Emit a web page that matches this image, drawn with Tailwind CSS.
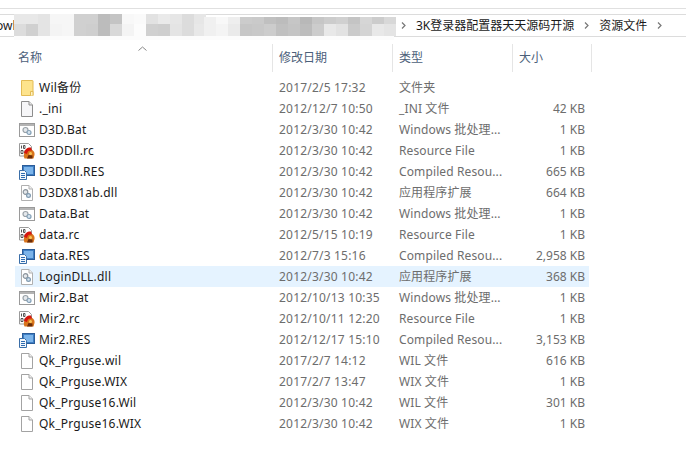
<!DOCTYPE html>
<html lang="zh-CN">
<head>
  <meta charset="UTF-8" />
  <title>资源文件</title>
  <script src="https://cdn.jsdelivr.net/npm/@tailwindcss/browser@4"></script>
</head>
<body class="relative h-[472px] w-[686px] overflow-hidden bg-white font-['Noto_Sans','Noto_Sans_CJK_SC',sans-serif] text-xs">

<svg class="hidden">
  <symbol id="folder" viewBox="0 0 16 16">
    <path d="M2.5 .5h11a.5.5 0 0 1 .5.5v14.5H2.500z" fill="#fde38c" stroke="#e3bb55"/>
    <path d="M11.500 15.500v-4h2.500v4" fill="#fff3c4" stroke="#e3bb55"/>
  </symbol>
  <symbol id="file" viewBox="0 0 16 16">
    <path d="M2.500 .5h7.500l3.500 3.500v11.500h-11z" fill="#fff" stroke="#a3a3a3"/>
    <path d="M10 .5v3.500h3.500" fill="#f0f0f0" stroke="#a3a3a3"/>
  </symbol>
  <symbol id="ini" viewBox="0 0 16 16">
    <path d="M2.500 .5h7.500l3.500 3.500v11.500h-11z" fill="#f6f6f8" stroke="#8d8d8d"/>
    <path d="M10 .5v3.500h3.500" fill="#e8e8e8" stroke="#8d8d8d"/>
  </symbol>
  <symbol id="dll" viewBox="0 0 16 16">
    <path d="M2.500 .5h7.500l3.500 3.500v11.500h-11z" fill="#fff" stroke="#b0b0b0"/>
    <path d="M10 .5v3.500h3.500" fill="#eee" stroke="#b0b0b0"/>
    <circle cx="6.500" cy="7" r="2.300" fill="#e4e8ec" stroke="#8b949c" stroke-width="1.200"/>
    <circle cx="9.500" cy="10.500" r="1.900" fill="#d4e2ee" stroke="#7f9ab0" stroke-width="1.200"/>
  </symbol>
  <symbol id="bat" viewBox="0 0 16 16">
    <rect x=".5" y="1.500" width="15" height="13" fill="#fff" stroke="#9a9a9a"/>
    <rect x="1" y="2" width="14" height="2" fill="#b4b4b4"/>
    <circle cx="6.500" cy="8" r="2.500" fill="#e4e8ec" stroke="#9aa2a8" stroke-width="1.200"/>
    <circle cx="10" cy="10.500" r="2" fill="#d4e2ee" stroke="#84a0b6" stroke-width="1.200"/>
  </symbol>
  <symbol id="rc" viewBox="0 0 16 16">
    <path d="M.5 .5h9l3 3v9.500h-12z" fill="#fff" stroke="#9a9a9a"/>
    <path d="M2.500 2.500v3M4.500 2.500h1.500v3h-1.500zM2 7.500h2v3h-2zM6 7.500v3" fill="none" stroke="#444" stroke-width=".9"/>
    <path d="M5.500 15.500c-1.500-3-.5-7.500 3.500-9 4-1 7 2 6.500 5.500l-1 3.500z" fill="#d9741c"/>
    <path d="M5 10c.5-4 4-6 7-5.500l1 3c-3-.5-4.500 .5-5 3.500z" fill="#d5160e"/>
    <path d="M8 15.500l1.500-3.500 4 .5v3z" fill="#6b2c08"/>
    <circle cx="11.500" cy="10.500" r="1.500" fill="#f7c65c"/>
  </symbol>
  <symbol id="res" viewBox="0 0 16 16">
    <rect x="3.500" y="1.500" width="12" height="10" fill="#3e7fc4" stroke="#2b5c99"/>
    <rect x="5" y="3" width="9" height="7" fill="#7cb4ea"/>
    <path d="M.5 6.500h5l2 2v7h-7z" fill="#f4f8fc" stroke="#3a6ea8"/>
    <path d="M2 9.500h4M2 11.500h4M2 13.500h4" stroke="#2d6bb0"/>
  </symbol>
</svg>

<div class="pt-[8px]"><div class="h-px bg-[#e0e0e0]"></div></div>

<!-- address bar -->
<div class="mt-[5px] flex h-[23px] items-center border-y border-[#dcdcdc] text-[#1a1a1a]">
  <span class="ml-[-4px] w-[18px] shrink-0 overflow-hidden">owl</span>
  <div class="ml-[387px] flex items-center">
    <svg class="h-[7px] w-[5px]" viewBox="0 0 5 7"><path d="M1 .5l3 3-3 3" fill="none" stroke="#777" stroke-width="1.200"/></svg>
    <span class="ml-[10px] whitespace-nowrap">3K登录器配置器天天源码开源</span>
    <svg class="ml-[10px] h-[7px] w-[5px]" viewBox="0 0 5 7"><path d="M1 .5l3 3-3 3" fill="none" stroke="#777" stroke-width="1.200"/></svg>
    <span class="ml-[10px] whitespace-nowrap">资源文件</span>
    <svg class="ml-[10px] h-[7px] w-[5px]" viewBox="0 0 5 7"><path d="M1 .5l3 3-3 3" fill="none" stroke="#777" stroke-width="1.200"/></svg>
  </div>
</div>

<!-- pixelated part of the path -->
<div id="mos1" class="absolute left-[14px] top-[14px] grid h-[22px] w-[190px] grid-cols-[repeat(16,12px)] grid-rows-[10px_12px] bg-white"></div>
<div id="mos2" class="absolute left-[204px] top-[17px] grid h-[19px] w-[190px] grid-cols-[repeat(16,12px)] grid-rows-[7px_12px] bg-white"></div>
<div class="absolute left-[14px] top-[36px] h-[4px] w-[380px] bg-[#fcfcfc]"></div>

<!-- column headers -->
<div class="relative mt-[7px] flex h-[28px] items-center text-[#4c607a]">
  <svg class="absolute left-[138px] top-[2px] h-[5px] w-[9px]" viewBox="0 0 9 5"><path d="M.5 4.500l4-3.500 4 3.500" fill="none" stroke="#888"/></svg>
  <span class="w-[272px] border-r-0 pl-[18px]">名称</span>
  <span class="h-full w-[120px] border-l border-[#e5e5e5] pl-[6px] leading-[28px]">修改日期</span>
  <span class="h-full w-[120px] border-l border-[#e5e5e5] pl-[6px] leading-[28px]">类型</span>
  <span class="h-full w-[80px] border-x border-[#e5e5e5] pl-[6px] leading-[28px]">大小</span>
</div>

<!-- rows -->
<div id="rows" class="ml-[15px] mt-[5px] w-[574px]"></div>

<script>
  const files = [
    ["folder", "Wil备份", "2017/2/5 17:32", "文件夹", ""],
    ["ini", "._ini", "2012/12/7 10:50", "_INI 文件", "42 KB"],
    ["bat", "D3D.Bat", "2012/3/30 10:42", "Windows 批处理...", "1 KB"],
    ["rc", "D3DDll.rc", "2012/3/30 10:42", "Resource File", "1 KB"],
    ["res", "D3DDll.RES", "2012/3/30 10:42", "Compiled Resou...", "665 KB"],
    ["dll", "D3DX81ab.dll", "2012/3/30 10:42", "应用程序扩展", "664 KB"],
    ["bat", "Data.Bat", "2012/3/30 10:42", "Windows 批处理...", "1 KB"],
    ["rc", "data.rc", "2012/5/15 10:19", "Resource File", "1 KB"],
    ["res", "data.RES", "2012/7/3 15:16", "Compiled Resou...", "2,958 KB"],
    ["dll", "LoginDLL.dll", "2012/3/30 10:42", "应用程序扩展", "368 KB"],
    ["bat", "Mir2.Bat", "2012/10/13 10:35", "Windows 批处理...", "1 KB"],
    ["rc", "Mir2.rc", "2012/10/11 12:20", "Resource File", "1 KB"],
    ["res", "Mir2.RES", "2012/12/17 15:10", "Compiled Resou...", "3,153 KB"],
    ["file", "Qk_Prguse.wil", "2017/2/7 14:12", "WIL 文件", "616 KB"],
    ["file", "Qk_Prguse.WIX", "2017/2/7 13:47", "WIX 文件", "1 KB"],
    ["file", "Qk_Prguse16.Wil", "2012/3/30 10:42", "WIL 文件", "301 KB"],
    ["file", "Qk_Prguse16.WIX", "2012/3/30 10:42", "WIX 文件", "1 KB"]
  ];

  document.getElementById("rows").innerHTML = files.map(function (f, i) {
    const bg = i == 9 ? "bg-[#e5f3ff]" : "";
    return `<div class="flex h-[21px] items-center pl-[4px] pr-[4px] ${bg}">
      <svg class="h-[16px] w-[16px] shrink-0"><use href="#${f[0]}"></use></svg>
      <span class="ml-[4px] w-[240px] shrink-0 tracking-[0.22px] text-[#1a1a1a]">${f[1]}</span>
      <span class="w-[120px] shrink-0 tracking-[0.2px] text-[#6d6d6d]">${f[2]}</span>
      <span class="w-[120px] shrink-0 tracking-[0.12px] text-[#6d6d6d]">${f[3]}</span>
      <span class="flex-1 text-right text-[#6d6d6d]">${f[4]}</span>
    </div>`;
  }).join("");

  const mos1 = ["#e8e8e8","#e8e8e8","#e4e4e4","#f6f6f6","#f6f6f6","#d0d0d0","#d0d0d0","#bcbcbc","#c4c4c4","#f8f8f8","#fafafa","#e2e2e2","#eaeaea","#e6e6e6","#dcdcdc","#e6e6e6",
               "#dcdcdc","#d0d0d0","#e4e4e4","#f4f4f4","#f6f6f6","#d0d0d0","#cecece","#bcbcbc","#d8d8d8","#f4f4f4","#fcfcfc","#d0d0d0","#cecece","#e4e4e4","#dcdcdc","#e8e8e8"];
  const mos2 = ["#f0f0f0","#f8f8f8","#eeeeee","#cccccc","#cacaca","#c0c0c0","#bcbcbc","#c6c6c6","#b8b8b8","#c6c6c6","#cccccc","#d0d0d0","#c4c4c4","#d6d6d6","#cccccc","#d8d8d8",
               "#f0f0f0","#f4f4f4","#eaeaea","#c6c6c6","#c8c8c8","#cccccc","#c0c0c0","#c4c4c4","#bcbcbc","#cccccc","#e8e8e8","#e2e2e2","#cacaca","#d4d4d4","#e8e8e8","#e4e4e4"];
  function cells(id, colors) {
    document.getElementById(id).innerHTML = colors.map(c => `<div style="background:${c}"></div>`).join("");
  }
  cells("mos1", mos1);
  cells("mos2", mos2);
</script>

</body>
</html>
